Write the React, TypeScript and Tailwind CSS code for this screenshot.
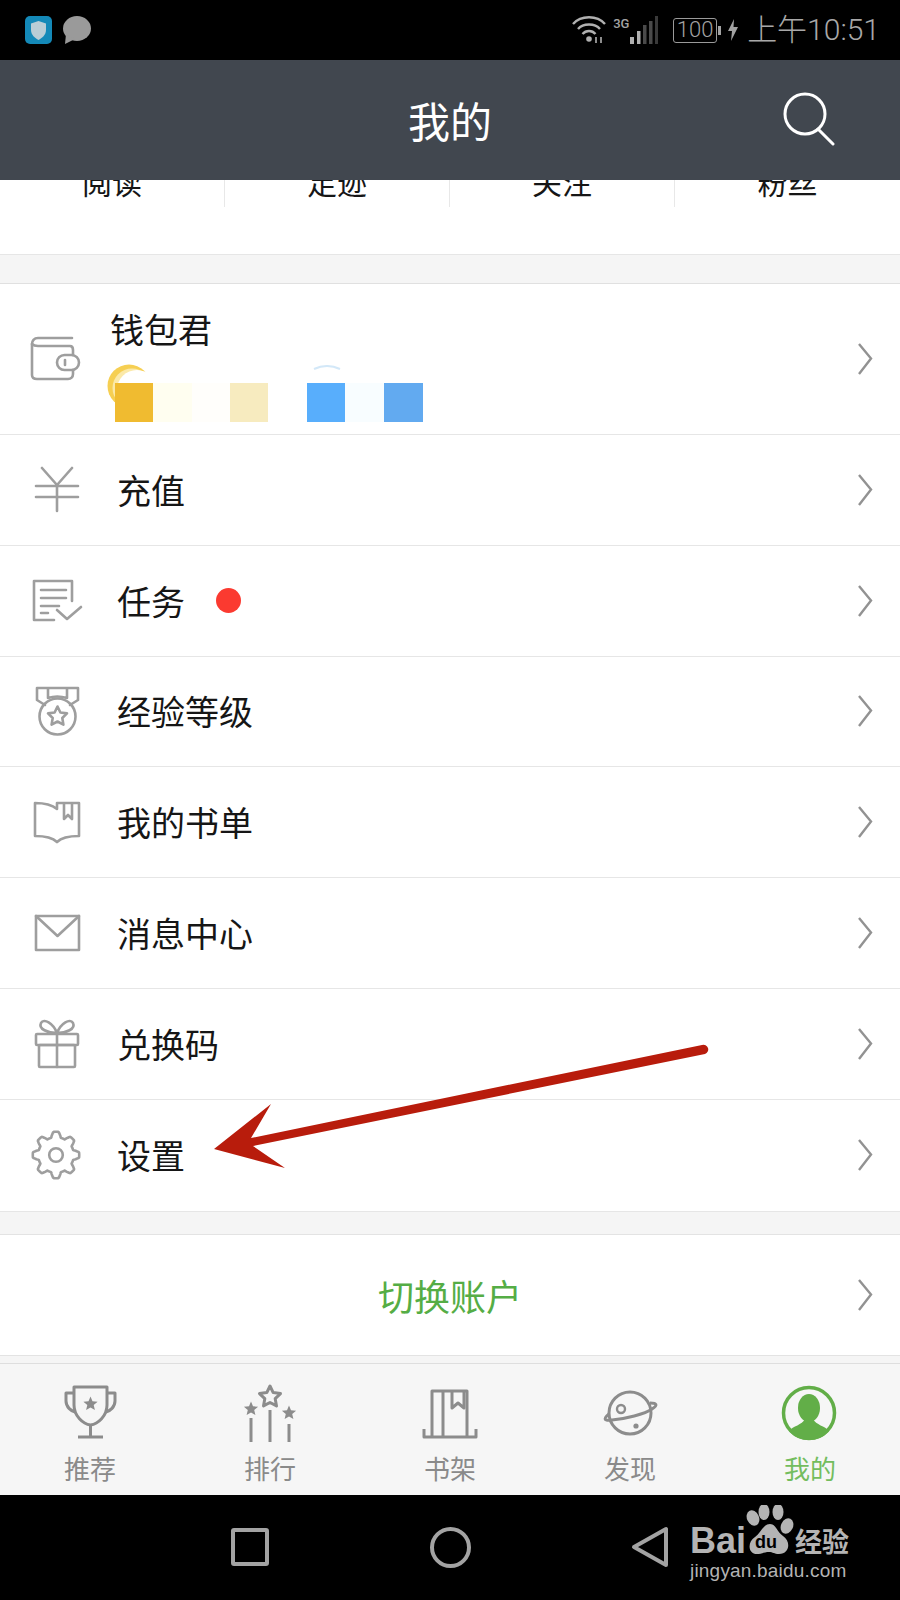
import type { ReactNode } from 'react'

// Points of a five pointed star around (cx, cy)
function starPoints(cx: number, cy: number, r: number, inner = r * 0.45) {
  const pts: string[] = []
  for (let i = 0; i < 10; i++) {
    const rad = i % 2 === 0 ? r : inner
    const a = -Math.PI / 2 + (i * Math.PI) / 5
    pts.push(`${(cx + rad * Math.cos(a)).toFixed(1)},${(cy + rad * Math.sin(a)).toFixed(1)}`)
  }
  return pts.join(' ')
}

// Outline of a cog with rounded teeth
function gearPath(cx: number, cy: number, r: number, depth: number, teeth: number) {
  let d = ''
  for (let i = 0; i <= 240; i++) {
    const a = (i / 240) * Math.PI * 2
    const wave = Math.max(-1, Math.min(1, Math.cos(teeth * a) * 1.7))
    const rad = r + depth * wave
    d += `${i === 0 ? 'M' : 'L'}${(cx + rad * Math.cos(a)).toFixed(1)} ${(cy + rad * Math.sin(a)).toFixed(1)}`
  }
  return d + 'Z'
}

function MenuIcon({ children }: { children: ReactNode }) {
  return (
    <svg
      viewBox="0 0 60 60"
      className="h-[60px] w-[60px] shrink-0"
      fill="none"
      stroke="#9e9e9e"
      strokeWidth={2.6}
      strokeLinecap="round"
      strokeLinejoin="round"
    >
      {children}
    </svg>
  )
}

function TabIcon({ children }: { children: ReactNode }) {
  return (
    <svg
      viewBox="0 0 60 60"
      className="h-[60px] w-[60px]"
      fill="none"
      stroke="#8c8c8c"
      strokeWidth={3}
      strokeLinejoin="round"
    >
      {children}
    </svg>
  )
}

function Chevron() {
  return (
    <svg viewBox="0 0 16 32" className="ml-auto mr-[27px] h-[32px] w-[16px] shrink-0" fill="none" stroke="#929292" strokeWidth={2.4}>
      <path d="M2 1 L14 15.5 L2 31" />
    </svg>
  )
}

const menuRows: { label: string; dot?: boolean; icon: ReactNode }[] = [
  {
    label: '充值',
    icon: (
      <path d="M16 8 L31 25 L46 8 M10 26 H52 M10 37 H52 M31 25 V51" />
    ),
  },
  {
    label: '任务',
    dot: true,
    icon: (
      <>
        <path d="M46 30 V10 H8 V49 H28" />
        <path d="M15 19 H40 M15 27 H40 M15 35 H33 M15 42 H22" />
        <path d="M31 39 L41 48 L55 36" />
      </>
    ),
  },
  {
    label: '经验等级',
    icon: (
      <>
        <path d="M19 24 L11 19 V7 H52 V19 L44 24 M22 7 V17 M41 7 V17 M22 17 Q31 14 41 17" />
        <circle cx="31.5" cy="35.5" r="18" />
        <polygon points={starPoints(31.5, 35.5, 10, 5)} />
      </>
    ),
  },
  {
    label: '我的书单',
    icon: (
      <>
        <path d="M31 17 C25 12 16 11 9 11 V44 C17 44 26 45 31 50 C36 45 45 44 53 44 V11 H31 Z" />
        <path d="M38 12 V27 L42 23 L46 27 V12" />
      </>
    ),
  },
  {
    label: '消息中心',
    icon: (
      <>
        <rect x="10" y="13" width="43" height="34" />
        <path d="M10 13 L31.5 33 L53 13" />
      </>
    ),
  },
  {
    label: '兑换码',
    icon: (
      <>
        <rect x="10" y="20" width="42" height="11" rx="1" />
        <rect x="13" y="31" width="36" height="22" rx="1" />
        <path d="M31 20 V53" />
        <path d="M31 19 C27 9 18 4 15 9 C12 15 22 19 31 19 C40 19 50 15 47 9 C44 4 35 9 31 19 Z" />
      </>
    ),
  },
  {
    label: '设置',
    icon: (
      <>
        <path d={gearPath(30, 30, 20.5, 2.7, 8)} />
        <circle cx="30" cy="30" r="6.8" />
      </>
    ),
  },
]

const tabs: { label: string; active?: boolean; icon: ReactNode }[] = [
  {
    label: '推荐',
    icon: (
      <>
        <path d="M14 4 H47 V22 C47 33 38 41 30.5 42 C23 41 14 33 14 22 Z" />
        <path d="M14 10 H6 V18 C6 24 11 28 15 29 M47 10 H55 V18 C55 24 50 28 46 29" />
        <path d="M30.5 42 V54 M18 54 H43" />
        <polygon points={starPoints(30.5, 21, 7.5)} fill="#8c8c8c" stroke="none" />
      </>
    ),
  },
  {
    label: '排行',
    icon: (
      <>
        <polygon points={starPoints(30, 14, 11, 5.5)} />
        <polygon points={starPoints(11, 26, 7.5)} fill="#8c8c8c" stroke="none" />
        <polygon points={starPoints(49, 30, 7.5)} fill="#8c8c8c" stroke="none" />
        <path d="M11 35 V59 M30 27 V59 M49 41 V59" />
      </>
    ),
  },
  {
    label: '书架',
    icon: (
      <>
        <path d="M4 46 V54 H56 V46" />
        <path d="M12 54 V8 H47 V54 M23 8 V54" />
        <path d="M32 8 V25 L38 20 L44 25 V8" />
      </>
    ),
  },
  {
    label: '发现',
    icon: (
      <>
        <circle cx="30" cy="30" r="21" />
        <path d="M9 31 C3 36 4 38 12 37 C25 36 45 31 52 26 C58 22 57 20 50 20" />
        <circle cx="21" cy="26" r="4" strokeWidth={2.4} />
        <circle cx="36" cy="43" r="2.6" fill="#8c8c8c" stroke="none" />
      </>
    ),
  },
  {
    label: '我的',
    active: true,
    icon: (
      <>
        <circle cx="29" cy="30" r="25.5" stroke="#62ae48" strokeWidth={3.5} />
        <ellipse cx="29" cy="25" rx="11" ry="14" fill="#62ae48" stroke="none" />
        <path
          d="M9 48 C13 43 22 42 25 36 H33 C36 42 45 43 49 48 C44 54 37 57 29 57 C21 57 14 54 9 48 Z"
          fill="#62ae48"
          stroke="none"
        />
      </>
    ),
  },
]

function StatusBar() {
  return (
    <div className="flex h-[60px] shrink-0 items-center bg-black pl-[25px] pr-[20px]">
      <svg viewBox="0 0 27 28" className="h-[28px] w-[27px]">
        <rect width="27" height="28" rx="5" fill="#1489b8" />
        <path d="M13.5 5 L21 7.5 V14 C21 19 17 22 13.5 24 C10 22 6 19 6 14 V7.5 Z" fill="#b9cdd6" />
      </svg>
      <svg viewBox="0 0 29 28" className="ml-[10px] h-[28px] w-[29px]">
        <ellipse cx="15" cy="12.5" rx="14" ry="12.5" fill="#9a9a9a" />
        <path d="M4 18 L3 28 L13 23 Z" fill="#9a9a9a" />
      </svg>

      <div className="ml-auto flex items-center text-[#a3a3a3]">
        <svg viewBox="0 0 34 28" className="h-[28px] w-[34px]" fill="none" stroke="#b0b0b0" strokeWidth={2.4}>
          <path d="M1 8 C9 -1 25 -1 33 8 M6 13 C11 7 23 7 28 13 M10.500 18 C14 14 20 14 23.500 18" />
          <circle cx="17" cy="23" r="2.800" fill="#b0b0b0" stroke="none" />
          <path d="M24 21 V27 M29 21 V27" strokeWidth={1.6} />
        </svg>
        <span className="ml-[7px] mb-[12px] w-[17px] font-['Roboto',sans-serif] text-[13px] font-medium leading-[14px] text-[#a3a3a3]">3G</span>
        <svg viewBox="0 0 28 28" className="h-[28px] w-[28px]">
          <rect x="0" y="21" width="4" height="7" fill="#b0b0b0" />
          <rect x="7" y="15" width="3.500" height="13" fill="#b0b0b0" />
          <rect x="13" y="9" width="3.500" height="19" fill="#4a4a4a" />
          <rect x="19" y="5" width="3.500" height="23" fill="#4a4a4a" />
          <rect x="25" y="0" width="3" height="28" fill="#3a3a3a" />
        </svg>
        <div className="ml-[15px] flex h-[25px] w-[44px] items-center justify-center rounded-[3px] border border-[#9a9a9a] font-['Roboto',sans-serif] text-[22px] font-light leading-none text-[#a3a3a3]">
          100
        </div>
        <div className="ml-[1px] h-[9px] w-[3px] bg-[#a3a3a3]" />
        <svg viewBox="0 0 10 22" className="ml-[7px] h-[22px] w-[10px]">
          <path d="M6 0 L0 12 H4 L3 22 L10 8 H5.500 Z" fill="#a3a3a3" />
        </svg>
        <span className="ml-[9px] whitespace-nowrap font-['Roboto','Noto_Sans_CJK_SC',sans-serif] text-[30px] font-light leading-[36px] text-[#a8a8a8]">
          上午10:51
        </span>
      </div>
    </div>
  )
}

function WalletRow() {
  return (
    <div className="flex h-[151px] shrink-0 items-center border-b border-[#e6e6e6] pl-[26px]">
      <MenuIcon>
        <path d="M46 9 H12 C8 9 6 12 6 15 V46 C6 49 8 50 11 50 H42 C45 50 47 48 47 45 V41" />
        <path d="M6 15 C7 16 9 17 12 17 H44 C46 17 47 19 47 21 V26" />
        <rect x="31" y="26" width="22" height="15" rx="7.500" />
        <path d="M39 31 V36" />
      </MenuIcon>
      <div className="ml-[24px] flex flex-col self-stretch pt-[25px]">
        <span className="text-[34px] leading-[40px] text-[#161616]">钱包君</span>
        <div className="relative ml-[5px] mt-[34px] flex">
          {/* coin and gem peeking out above the reward chips */}
          <svg viewBox="0 0 50 56" className="absolute left-[-8px] top-[-19px] h-[56px] w-[50px]">
            <circle cx="22" cy="22" r="21.500" fill="#f6cf52" />
            <circle cx="25" cy="24" r="19.500" fill="#fbe9a8" />
            <circle cx="30" cy="26" r="20" fill="#ffffff" />
          </svg>
          <svg viewBox="0 0 38 18" className="absolute left-[193px] top-[-18px] h-[18px] w-[38px]">
            <path d="M6 4 Q19 -2 32 4" fill="none" stroke="#d3e8f8" strokeWidth={2} />
          </svg>
          <div className="relative h-[39px] w-[38px] bg-[#f0bb30]" />
          <div className="relative h-[39px] w-[39px] bg-[#fffef0]" />
          <div className="relative h-[39px] w-[38px] bg-[#fffefb]" />
          <div className="relative h-[39px] w-[38px] bg-[#f7ebbf]" />
          <div className="relative h-[39px] w-[39px] bg-white" />
          <div className="relative h-[39px] w-[38px] bg-[#58aefc]" />
          <div className="relative h-[39px] w-[39px] bg-[#f8fdff]" />
          <div className="relative h-[39px] w-[39px] bg-[#62aaf0]" />
        </div>
      </div>
      <Chevron />
    </div>
  )
}

function BaiduMark() {
  return (
    <div className="absolute left-[690px] top-[1505px] h-[80px] w-[165px] text-[#b4b4b4]">
      <span className="absolute left-0 top-[15px] font-['Liberation_Sans',sans-serif] text-[36px] font-bold leading-[42px]">Bai</span>
      <svg viewBox="0 0 50 50" className="absolute left-[55px] top-0 h-[50px] w-[50px]" fill="#b4b4b4">
        <ellipse cx="8" cy="13" rx="6" ry="8" transform="rotate(-25 8 13)" />
        <ellipse cx="19" cy="7" rx="5.500" ry="8" />
        <ellipse cx="33" cy="7" rx="5.500" ry="8" />
        <ellipse cx="42" cy="21" rx="6" ry="8" transform="rotate(25 42 21)" />
        <path d="M25 19 C31 19 32 27 38 31 C46 36 45 49 34 49 C29 49 28 47 24 47 C19 47 16 49 12 49 C3 49 2 37 10 32 C16 28 18 19 25 19 Z" />
      </svg>
      <span className="absolute left-[65px] top-[27px] font-['Liberation_Sans',sans-serif] text-[18px] font-bold leading-[20px] text-black">du</span>
      <span className="absolute left-[105px] top-[20px] whitespace-nowrap text-[27px] font-bold leading-[32px]">经验</span>
      <span className="absolute left-0 top-[54px] whitespace-nowrap font-['Liberation_Sans',sans-serif] text-[19px] leading-[24px] tracking-[0.2px]">
        jingyan.baidu.com
      </span>
    </div>
  )
}

export default function App() {
  return (
    <div className="relative flex h-[1600px] w-[900px] flex-col overflow-hidden bg-[#f5f5f5] font-['Noto_Sans_CJK_SC',sans-serif]">
      <StatusBar />

      {/* Title bar */}
      <div className="relative z-10 flex h-[120px] shrink-0 items-center justify-center bg-[#41474f]">
        <span className="text-[42px] leading-[48px] text-white">我的</span>
        <svg viewBox="0 0 52 54" className="absolute right-[65px] top-[32px] h-[54px] w-[52px]" fill="none" stroke="#ffffff" strokeWidth={3}>
          <circle cx="22" cy="22" r="20" />
          <path d="M35 37 L50 52" strokeLinecap="round" />
        </svg>
      </div>

      {/* Stats strip, scrolled partly under the title bar */}
      <div className="h-[75px] shrink-0 overflow-hidden border-b border-[#e6e6e6] bg-white">
        <div className="-mt-[20px] grid h-[47px] grid-cols-4">
          {['阅读', '足迹', '关注', '粉丝'].map((label, i) => (
            <div
              key={label}
              className={
                i < 3
                  ? 'flex items-end justify-center border-r border-[#e8e8e8] pb-[8px] text-[30px] leading-[36px] text-[#161616]'
                  : 'flex items-end justify-center pb-[8px] text-[30px] leading-[36px] text-[#161616]'
              }
            >
              {label}
            </div>
          ))}
        </div>
      </div>

      <div className="mt-[28px] flex shrink-0 flex-col border-t border-[#e0e0e0] bg-white">
        <WalletRow />
        {menuRows.map((row, i) => (
          <div
            key={row.label}
            className={
              i === menuRows.length - 1
                ? 'flex h-[112px] shrink-0 items-center border-b border-[#e6e6e6] pl-[26px]'
                : 'flex h-[110.8px] shrink-0 items-center border-b border-[#e6e6e6] pl-[26px]'
            }
          >
            <MenuIcon>{row.icon}</MenuIcon>
            <span className="ml-[31px] text-[34px] leading-[40px] text-[#161616]">{row.label}</span>
            {row.dot && <span className="ml-[31px] h-[25px] w-[25px] rounded-full bg-[#fb3a30]" />}
            <Chevron />
          </div>
        ))}
      </div>

      {/* Switch account */}
      <div className="relative mt-[22px] flex h-[122px] shrink-0 items-center justify-center border-y border-[#e3e3e3] bg-white">
        <span className="text-[36px] leading-[42px] text-[#55ad45]">切换账户</span>
        <div className="absolute right-0 top-0 flex h-full items-center">
          <Chevron />
        </div>
      </div>

      {/* Bottom tabs */}
      <div className="mt-[7px] grid h-[132px] shrink-0 grid-cols-5 border-t border-[#dedede] bg-[#f6f6f6] pt-[19px]">
        {tabs.map((tab) => (
          <div key={tab.label} className="flex flex-col items-center">
            <TabIcon>{tab.icon}</TabIcon>
            <span className={tab.active ? 'mt-[10px] text-[26px] leading-[30px] text-[#73bd5e]' : 'mt-[10px] text-[26px] leading-[30px] text-[#8a8a8a]'}>
              {tab.label}
            </span>
          </div>
        ))}
      </div>

      {/* System navigation */}
      <div className="flex flex-1 items-center justify-center bg-black">
        <div className="flex w-[200px] justify-center">
          <div className="h-[38px] w-[38px] rounded-[3px] border-[4px] border-[#a3a3a3]" />
        </div>
        <div className="flex w-[200px] justify-center">
          <div className="h-[41px] w-[41px] rounded-full border-[4px] border-[#a3a3a3]" />
        </div>
        <div className="flex w-[200px] justify-center">
          <svg viewBox="0 0 38 42" className="h-[42px] w-[38px]" fill="none" stroke="#a3a3a3" strokeWidth={4} strokeLinejoin="round">
            <path d="M35 3 V39 L3 21 Z" />
          </svg>
        </div>
      </div>

      <BaiduMark />

      {/* Red annotation arrow */}
      <svg viewBox="0 0 500 135" className="absolute left-[210px] top-[1040px] h-[135px] w-[500px]">
        <path d="M4 109 L61 64 L41 98 L492 5 A4.500 4.500 0 0 1 495 14 L43 106 L75 128 Z" fill="#b81c0c" />
      </svg>
    </div>
  )
}
